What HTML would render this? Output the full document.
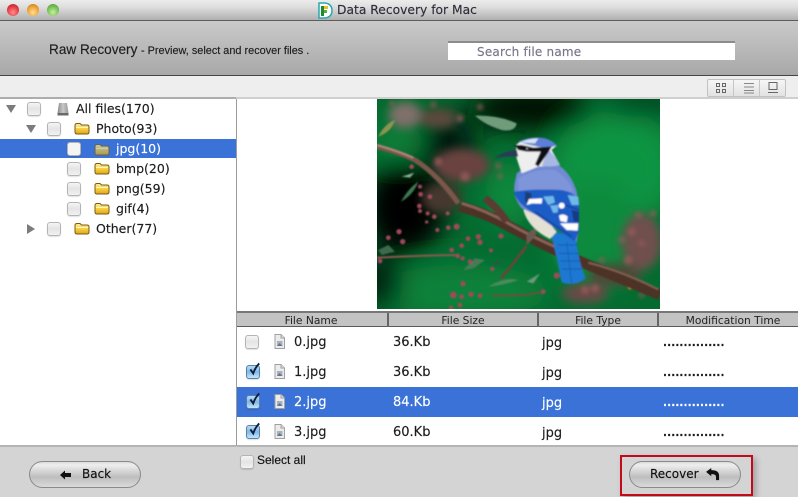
<!DOCTYPE html>
<html><head><meta charset="utf-8"><style>
html,body{margin:0;padding:0}
body{width:798px;height:497px;position:relative;overflow:hidden;background:#d4d4d4;font-family:"DejaVu Sans","Liberation Sans",sans-serif;font-size:12.5px;color:#1c1c1c}
.a{position:absolute}
.t{position:absolute;white-space:nowrap;line-height:16px;-webkit-text-stroke:.15px currentColor}
.r{font-size:13px}
.dots{font-size:10.5px;letter-spacing:.12px;font-weight:bold}
.cb{position:absolute;width:12px;height:12px;border:1px solid #b4b4b4;border-radius:3px;background:linear-gradient(#f4f4f4,#e4e4e4 50%,#f2f2f2);box-shadow:0 1px 1px rgba(0,0,0,.12)}
.cb.on{background:linear-gradient(#b8dcf6,#7fb8ea 50%,#c4e6fb);border-color:#5a80a8}
.tk{position:absolute;left:1px;top:-4px;width:12px;height:14px;overflow:visible}
.ic{position:absolute;overflow:visible}
.hd{position:absolute;top:314px;height:13px;line-height:13px;font-size:10.7px;text-align:center;color:#222}
.dv{position:absolute;top:313px;height:14px;width:2px;background:#666}
.btn{position:absolute;width:110px;height:25px;border:1px solid #8a8a8a;border-radius:14px;background:linear-gradient(#dcdcdc,#eeeeee 12%,#c8c8c8 50%,#bebebe 60%,#dadada)}
</style></head><body>
<svg width="0" height="0" style="position:absolute"><defs>
<linearGradient id="fg" x1="0" y1="0" x2="0" y2="1"><stop offset="0" stop-color="#fff0a0"/><stop offset=".5" stop-color="#f7cf40"/><stop offset="1" stop-color="#dfa51c"/></linearGradient>
<symbol id="f" viewBox="0 0 16 13"><path d="M1 3.500Q1 1.500 3 1.500H6L7.500 3H13Q15 3 15 5V10Q15 12 13 12H3Q1 12 1 10Z" fill="url(#fg)" stroke="#7a5c12" stroke-width="1"/><path d="M2 5.500H14" stroke="#fff6c0" stroke-width="1"/></symbol>
<symbol id="d" viewBox="0 0 11 15"><path d="M1 .5H7L10.500 4V14.500H1Z" fill="#ececec" stroke="#a0a0a0"/><path d="M7 .5V4H10.500" fill="#ddd" stroke="#a0a0a0"/><rect x="3" y="7" width="5.500" height="5" fill="#a8b0c0"/><path d="M3 12L5.500 9L8.500 12Z" fill="#6a7488"/></symbol>
<symbol id="k" viewBox="0 0 15 16"><path d="M3 8.500L6.500 13.500Q9 6 14 1" fill="none" stroke="#10203a" stroke-width="2.400"/></symbol>
</defs></svg>

<!-- title bar -->
<div class="a" style="left:0;top:0;width:798px;height:20px;background:linear-gradient(#ececec,#dedede 35%,#b0b0b0)"></div>
<div class="a" style="left:0;top:20px;width:798px;height:1px;background:#5c5c5c"></div>
<div class="a" style="left:7px;top:4px;width:12px;height:12px;border-radius:50%;background:radial-gradient(circle at 50% 70%,#ff9090,#e2343c 60%,#9a2a30)"></div>
<div class="a" style="left:27px;top:4px;width:12px;height:12px;border-radius:50%;background:radial-gradient(circle at 50% 70%,#ffe090,#ec9c30 60%,#a87028)"></div>
<div class="a" style="left:47px;top:4px;width:12px;height:12px;border-radius:50%;background:radial-gradient(circle at 50% 70%,#c8f0a0,#70bc50 60%,#4f8a40)"></div>
<svg class="ic" style="left:318px;top:2px" width="15" height="17" viewBox="0 0 15 17"><path d="M1 1H7Q14 2 14 8.500Q14 15 7 16H1Z" fill="#fff" stroke="#28a8b0" stroke-width="1.500"/><rect x="3" y="4" width="3" height="10" fill="#1e8a30"/><rect x="6" y="4" width="4" height="3" fill="#e8c020"/><rect x="6" y="8" width="3" height="3" fill="#50b040"/></svg>
<div class="t" style="left:337px;top:2px;font-size:12.300px;color:#2e2e3a">Data Recovery for Mac</div>

<!-- header -->
<div class="a" style="left:0;top:21px;width:798px;height:54px;background:linear-gradient(#cacaca,#a8a8a8)"></div>
<div class="a" style="left:0;top:75px;width:798px;height:1px;background:#454545"></div>
<div class="t" style="left:49px;top:42px;font-size:13.600px;font-family:'Liberation Sans',sans-serif;color:#1e1e1e">Raw Recovery</div>
<div class="t" style="left:141px;top:43px;font-size:10.900px;font-family:'Liberation Sans',sans-serif;color:#1e1e1e">- Preview, select and recover files .</div>
<div class="a" style="left:448px;top:41px;width:287px;height:17px;background:#fff;border-top:2px solid #8c8c8c"></div>
<div class="t" style="left:477px;top:44px;font-size:12px;letter-spacing:.2px;color:#77778a">Search file name</div>

<!-- toolbar -->
<div class="a" style="left:0;top:76px;width:798px;height:21px;background:#eeeeee"></div>
<div class="a" style="left:0;top:97px;width:236px;height:2px;background:#adadad"></div>
<div class="a" style="left:236px;top:97px;width:562px;height:2px;background:#cfcfcf"></div>
<div class="a" style="left:707px;top:79px;width:77px;height:16px;border:1px solid #c2c2c2;border-radius:2px;background:linear-gradient(#f6f6f6,#e2e2e2)"></div>
<div class="a" style="left:733px;top:80px;width:1px;height:16px;background:#c6c6c6"></div>
<div class="a" style="left:759px;top:80px;width:1px;height:16px;background:#c6c6c6"></div>
<svg class="ic" style="left:715px;top:82px" width="62" height="12" viewBox="0 0 62 12" fill="none" stroke="#666"><rect x="1.500" y="1.500" width="3" height="3"/><rect x="7.500" y="1.500" width="3" height="3"/><rect x="1.500" y="7.500" width="3" height="3"/><rect x="7.500" y="7.500" width="3" height="3"/><path d="M29 1.500H39M29 5H39M29 8.500H39M29 11H39" stroke-width=".8"/><rect x="54" y=".5" width="8" height="7"/><path d="M53 10.500H63"/></svg>

<!-- panels -->
<div class="a" style="left:0;top:99px;width:236px;height:347px;background:#fff"></div>
<div class="a" style="left:236px;top:99px;width:1px;height:347px;background:#9c9c9c"></div>
<div class="a" style="left:237px;top:99px;width:561px;height:212px;background:#fff"></div>

<!-- tree -->
<div class="a" style="left:0;top:139px;width:236px;height:19px;background:#3a72d8"></div>
<svg class="ic" style="left:0;top:100px" width="40" height="140" viewBox="0 0 40 140" fill="#7c7c7c"><path d="M6 5H16L11 13Z"/><path d="M26 25H36L31 33Z"/><path d="M27 124V134L35 129Z"/></svg>
<div class="cb" style="left:27px;top:102px"></div>
<div class="cb" style="left:47px;top:122px"></div>
<div class="cb" style="left:67px;top:142px;background:#f4f4f4"></div>
<div class="cb" style="left:67px;top:162px"></div>
<div class="cb" style="left:67px;top:182px"></div>
<div class="cb" style="left:67px;top:202px"></div>
<div class="cb" style="left:47px;top:222px"></div>
<svg class="ic" style="left:57px;top:102px" width="12" height="14" viewBox="0 0 12 14"><defs><linearGradient id="dg" x1="0" x2="1" y1="0" y2="0"><stop offset="0" stop-color="#888"/><stop offset=".5" stop-color="#c8c8c8"/><stop offset="1" stop-color="#999"/></linearGradient></defs><path d="M2 1H10L11.500 11H.5Z" fill="url(#dg)"/><rect x=".5" y="11" width="11" height="2.500" fill="#6a6a6a"/></svg>
<svg class="ic" style="left:74px;top:122px" width="16" height="13"><use href="#f"/></svg>
<svg class="ic" style="left:94px;top:143px;opacity:.7" width="16" height="13"><use href="#f"/></svg>
<svg class="ic" style="left:94px;top:162px" width="16" height="13"><use href="#f"/></svg>
<svg class="ic" style="left:94px;top:182px" width="16" height="13"><use href="#f"/></svg>
<svg class="ic" style="left:94px;top:202px" width="16" height="13"><use href="#f"/></svg>
<svg class="ic" style="left:74px;top:222px" width="16" height="13"><use href="#f"/></svg>
<div class="t" style="left:76px;top:101px">All files(170)</div>
<div class="t" style="left:96px;top:121px">Photo(93)</div>
<div class="t" style="left:116px;top:141px;color:#fff">jpg(10)</div>
<div class="t" style="left:116px;top:161px">bmp(20)</div>
<div class="t" style="left:116px;top:181px">png(59)</div>
<div class="t" style="left:116px;top:201px">gif(4)</div>
<div class="t" style="left:96px;top:221px">Other(77)</div>

<!-- photo -->
<svg class="ic" style="left:377px;top:99px;overflow:hidden" width="283" height="210" viewBox="6 12 849 630">
<defs>
<filter id="b40" x="-50%" y="-50%" width="200%" height="200%"><feGaussianBlur stdDeviation="38"/></filter>
<filter id="b12" x="-30%" y="-30%" width="160%" height="160%"><feGaussianBlur stdDeviation="14"/></filter>
<filter id="b5" x="-30%" y="-30%" width="160%" height="160%"><feGaussianBlur stdDeviation="6"/></filter>
<filter id="b2" x="-10%" y="-10%" width="120%" height="120%"><feGaussianBlur stdDeviation="2.400"/></filter>
<clipPath id="cp"><rect x="6" y="12" width="849" height="630"/></clipPath>
</defs>
<g clip-path="url(#cp)">
<rect x="6" y="12" width="849" height="630" fill="#056a30"/>
<g filter="url(#b40)">
<ellipse cx="720" cy="220" rx="190" ry="180" fill="#0a9442"/>
<ellipse cx="660" cy="420" rx="140" ry="170" fill="#098a3c"/>
<ellipse cx="400" cy="300" rx="70" ry="100" fill="#098a3e"/>
<ellipse cx="260" cy="590" rx="260" ry="80" fill="#09823a"/>
<ellipse cx="70" cy="140" rx="80" ry="50" fill="#09823a"/>
<ellipse cx="90" cy="340" rx="120" ry="140" fill="#000604"/>
<ellipse cx="20" cy="560" rx="60" ry="80" fill="#02140c"/>
<ellipse cx="470" cy="40" rx="190" ry="65" fill="#010a06"/>
<ellipse cx="800" cy="30" rx="120" ry="35" fill="#04351c"/>
<ellipse cx="220" cy="150" rx="80" ry="90" fill="#04180c"/>
</g>
<!-- blurred blossoms -->
<g filter="url(#b12)">
<ellipse cx="90" cy="60" rx="50" ry="40" fill="#80706a"/>
<ellipse cx="190" cy="70" rx="60" ry="30" fill="#5c4a3e"/>
<ellipse cx="260" cy="210" rx="85" ry="50" fill="#6a4240"/>
<ellipse cx="200" cy="310" rx="60" ry="45" fill="#46382f"/>
<ellipse cx="800" cy="440" rx="60" ry="85" fill="#70504e"/>
<ellipse cx="720" cy="540" rx="80" ry="35" fill="#4e4a38"/>
<ellipse cx="630" cy="595" rx="70" ry="30" fill="#6a4a46"/>
</g>
<g filter="url(#b5)" fill="#985a5c" opacity=".85">
<circle cx="315" cy="36" r="9"/><circle cx="255" cy="70" r="10"/><circle cx="175" cy="28" r="8"/><circle cx="50" cy="25" r="7"/><circle cx="370" cy="212" r="9"/><circle cx="375" cy="243" r="8"/><circle cx="270" cy="245" r="14"/><circle cx="190" cy="200" r="12"/><circle cx="770" cy="410" r="12"/><circle cx="740" cy="435" r="9"/><circle cx="790" cy="360" r="9"/><circle cx="835" cy="355" r="9"/><circle cx="760" cy="495" r="13"/><circle cx="680" cy="495" r="8"/><circle cx="800" cy="445" r="9"/><circle cx="660" cy="580" r="12"/><circle cx="630" cy="585" r="12"/><circle cx="800" cy="600" r="8"/>
</g>
<ellipse cx="765" cy="572" rx="8" ry="12" fill="#c87a20" filter="url(#b2)"/>
<g filter="url(#b2)">
<!-- branches -->
<path d="M6 155Q70 170 120 195Q190 240 250 325" fill="none" stroke="#7a564c" stroke-width="15"/>
<path d="M6 150Q60 165 115 188" fill="none" stroke="#ae8a80" stroke-width="6"/>
<path d="M255 335Q320 350 385 385Q450 420 500 445Q570 480 640 510Q740 550 855 600" fill="none" stroke="#4e3026" stroke-width="32"/>
<path d="M260 325Q330 345 400 385Q470 425 540 455" fill="none" stroke="#8c6458" stroke-width="8"/>
<path d="M640 503Q740 528 850 583" fill="none" stroke="#806050" stroke-width="6"/>
<path d="M330 310Q370 340 395 380" fill="none" stroke="#5c3a30" stroke-width="22"/>
<path d="M6 488Q120 482 245 480" fill="none" stroke="#8a5a50" stroke-width="6"/>
<path d="M378 550Q420 500 455 452" fill="none" stroke="#6a4438" stroke-width="8"/>
<path d="M350 600Q430 605 500 592" fill="none" stroke="#7a4a3c" stroke-width="5"/>
<!-- leaves -->
<path d="M300 62Q370 60 425 85Q420 112 380 105Q330 90 300 62Z" fill="#6f9c7c"/>
<path d="M10 125Q30 85 60 75Q50 110 10 125Z" fill="#8c9450"/>
<path d="M80 245L118 233L105 248Z" fill="#8ab09a"/><path d="M78 320Q100 280 130 260Q115 300 78 320Z" fill="#3e7a50"/>
<path d="M265 525L300 490L330 495L295 520Z" fill="#4a7a58"/><path d="M340 575Q390 545 430 555Q390 570 340 575Z" fill="#4e8a5c"/><path d="M455 560L495 535L475 565Z" fill="#6a9a7a"/>
<path d="M10 465L40 450L60 470L20 480Z" fill="#3e6a4e"/>
<path d="M345 510L390 490L370 510Z" fill="#2a5a3c"/>
<!-- buds -->
<g fill="#a04a58">
<circle cx="72" cy="410" r="8"/><circle cx="40" cy="428" r="7"/><circle cx="83" cy="440" r="8"/><circle cx="15" cy="498" r="7"/>
<circle cx="110" cy="215" r="7"/><circle cx="137" cy="298" r="7"/><circle cx="165" cy="305" r="7"/><circle cx="133" cy="333" r="7"/><circle cx="135" cy="348" r="6"/><circle cx="158" cy="355" r="6"/><circle cx="178" cy="365" r="7"/><circle cx="218" cy="355" r="6"/><circle cx="155" cy="381" r="5"/><circle cx="187" cy="405" r="6"/><circle cx="220" cy="398" r="7"/><circle cx="245" cy="395" r="9"/><circle cx="135" cy="275" r="6"/>
<circle cx="279" cy="431" r="7"/><circle cx="310" cy="425" r="8"/><circle cx="315" cy="442" r="8"/><circle cx="260" cy="452" r="7"/><circle cx="230" cy="465" r="7"/><circle cx="248" cy="483" r="7"/><circle cx="285" cy="500" r="7"/><circle cx="263" cy="490" r="6"/><circle cx="378" cy="423" r="8"/><circle cx="352" cy="522" r="6"/><circle cx="348" cy="466" r="6"/>
<circle cx="264" cy="566" r="8"/><circle cx="235" cy="600" r="10"/><circle cx="260" cy="605" r="7"/><circle cx="288" cy="598" r="8"/><circle cx="315" cy="602" r="7"/><circle cx="255" cy="630" r="7"/><circle cx="228" cy="638" r="6"/>
<circle cx="545" cy="542" r="9"/><circle cx="505" cy="590" r="7"/>
</g>
<!-- tail -->
<path d="M525 405L603 430Q610 500 632 550Q600 575 560 562Q545 480 525 405Z" fill="#1e78d2"/>
<g stroke="#125aa8" stroke-width="3" fill="none"><path d="M548 450H610M552 475H612M556 498H616M560 522H622"/><path d="M575 440L590 565" stroke-width="2.500"/></g>
<!-- belly -->
<path d="M445 345Q460 400 525 432L545 410L520 380L450 340Z" fill="#e4e0d4"/>
<!-- body -->
<path d="M425 235Q460 205 540 205Q585 225 605 290L612 345L612 400L605 440L570 410Q490 360 440 340Q415 310 418 270Z" fill="#6f8ad4"/>
<path d="M430 250Q480 220 540 225Q580 250 595 290H430Z" fill="#7f95da"/>
<!-- wing -->
<path d="M417 290Q480 280 560 285Q600 292 612 320L612 408L600 440Q540 400 470 350Q425 325 417 290Z" fill="#1d5cc6"/>
<path d="M450 290L470 295L465 330L450 320Z" fill="#1a3e78"/>
<path d="M590 345L612 350V380H596Z" fill="#123a86"/>
<g fill="#fff"><path d="M455 330L462 312L502 310L500 326L472 325Z"/><path d="M552 362Q565 354 578 365L575 382L556 378Z"/><path d="M555 385L610 385L608 407L575 405Z"/><circle cx="560" cy="332" r="9"/></g>
<g fill="#6fb8e8"><path d="M505 305L535 303L540 322L520 330Z"/><path d="M525 332L550 330L548 352L535 354Z"/><path d="M578 300L610 305L612 330L590 330Z"/></g>
<g stroke="#123a86" stroke-width="3" fill="none"><path d="M480 350L590 425"/><path d="M570 330L612 345"/></g>
<!-- head -->
<path d="M423 150Q450 125 500 130Q530 135 545 152L530 165L555 210L490 215L440 235L425 190Z" fill="#eeeeee"/>
<path d="M430 140Q470 122 510 130Q535 138 545 152Q520 160 490 155Q460 150 430 140Z" fill="#5c80d8"/>
<path d="M435 142Q460 130 490 130L480 145Z" fill="#d8e2f4"/>
<path d="M520 165Q540 180 555 210Q530 218 500 212Z" fill="#a8b8e4"/>
<path d="M418 150L440 150L475 158L530 155L520 172L490 215L480 208L497 170L455 170L430 165Z" fill="#0e0e14"/>
<path d="M358 190Q385 168 425 165L430 185Q395 182 358 190Z" fill="#2a3a58"/>
<circle cx="458" cy="162" r="6" fill="#22262e"/><circle cx="456" cy="161" r="2" fill="#dfe4ea"/>
<!-- foot -->
<path d="M455 420Q475 395 485 405L480 425L455 450Z" fill="#6a5a50"/>
</g>
</g>
</svg>

<!-- table header -->
<div class="a" style="left:237px;top:311px;width:561px;height:2px;background:#777"></div>
<div class="a" style="left:237px;top:313px;width:561px;height:14px;background:#c3c3c3"></div>
<div class="a" style="left:237px;top:326px;width:561px;height:1px;background:#5a5a5a"></div>
<div class="dv" style="left:387px"></div><div class="dv" style="left:537px"></div><div class="dv" style="left:657px"></div>
<div class="hd" style="left:238px;width:146px">File Name</div>
<div class="hd" style="left:390px;width:146px">File Size</div>
<div class="hd" style="left:540px;width:116px">File Type</div>
<div class="hd" style="left:660px;width:146px">Modification Time</div>

<!-- rows -->
<div class="a" style="left:237px;top:327px;width:561px;height:118px;background:#fff"></div>
<div class="a" style="left:237px;top:387px;width:561px;height:30px;background:#3a72d8"></div>
<div class="a" style="left:237px;top:445px;width:561px;height:2px;background:#b4b4b4"></div>
<div class="a" style="left:0;top:445px;width:236px;height:2px;background:#b4b4b4"></div>

<div class="cb" style="left:245px;top:335px"></div>
<div class="cb on" style="left:246px;top:365px"><svg class="tk"><use href="#k"/></svg></div>
<div class="cb on" style="left:246px;top:395px"><svg class="tk"><use href="#k"/></svg></div>
<div class="cb on" style="left:246px;top:425px"><svg class="tk"><use href="#k"/></svg></div>
<svg class="ic" style="left:274px;top:334px" width="11" height="15"><use href="#d"/></svg>
<svg class="ic" style="left:274px;top:364px" width="11" height="15"><use href="#d"/></svg>
<svg class="ic" style="left:274px;top:394px" width="11" height="15"><use href="#d"/></svg>
<svg class="ic" style="left:274px;top:424px" width="11" height="15"><use href="#d"/></svg>

<div class="t r" style="left:294px;top:335px">0.jpg</div><div class="t r" style="left:393px;top:335px">36.Kb</div><div class="t r" style="left:542px;top:336px">jpg</div><div class="t dots" style="left:663px;top:335px">...............</div>
<div class="t r" style="left:294px;top:365px">1.jpg</div><div class="t r" style="left:393px;top:365px">36.Kb</div><div class="t r" style="left:542px;top:366px">jpg</div><div class="t dots" style="left:663px;top:365px">...............</div>
<div class="t r" style="left:294px;top:395px;color:#fff">2.jpg</div><div class="t r" style="left:393px;top:395px;color:#fff">84.Kb</div><div class="t r" style="left:542px;top:396px;color:#fff">jpg</div><div class="t dots" style="left:663px;top:395px;color:#fff">...............</div>
<div class="t r" style="left:294px;top:425px">3.jpg</div><div class="t r" style="left:393px;top:425px">60.Kb</div><div class="t r" style="left:542px;top:426px">jpg</div><div class="t dots" style="left:663px;top:425px">...............</div>

<!-- footer -->
<div class="cb" style="left:240px;top:455px"></div>
<div class="t" style="left:257px;top:452px;font-size:12px;font-family:'Liberation Sans',sans-serif;color:#111">Select all</div>

<div class="btn" style="left:29px;top:461px"></div>
<svg class="ic" style="left:60px;top:470px" width="12" height="10" viewBox="0 0 12 10"><path d="M0 5L5 .5V3H11V7H5V9.500Z" fill="#111"/></svg>
<div class="t" style="left:82px;top:466px;font-size:12px;color:#111">Back</div>

<div class="a" style="left:620px;top:455px;width:129px;height:37px;border:2px solid #c20a18;box-shadow:3px 3px 6px rgba(0,0,0,.25)"></div>
<div class="btn" style="left:629px;top:461px"></div>
<div class="t" style="left:650px;top:466px;font-size:12px;color:#111">Recover</div>
<svg class="ic" style="left:706px;top:468px" width="14" height="13" viewBox="0 0 16 15"><path d="M0 4.500L6 0V2.500Q15 2.500 15 9V14H11.500V10Q11.500 7 6 7V9.500Z" fill="#111"/></svg>
</body></html>
